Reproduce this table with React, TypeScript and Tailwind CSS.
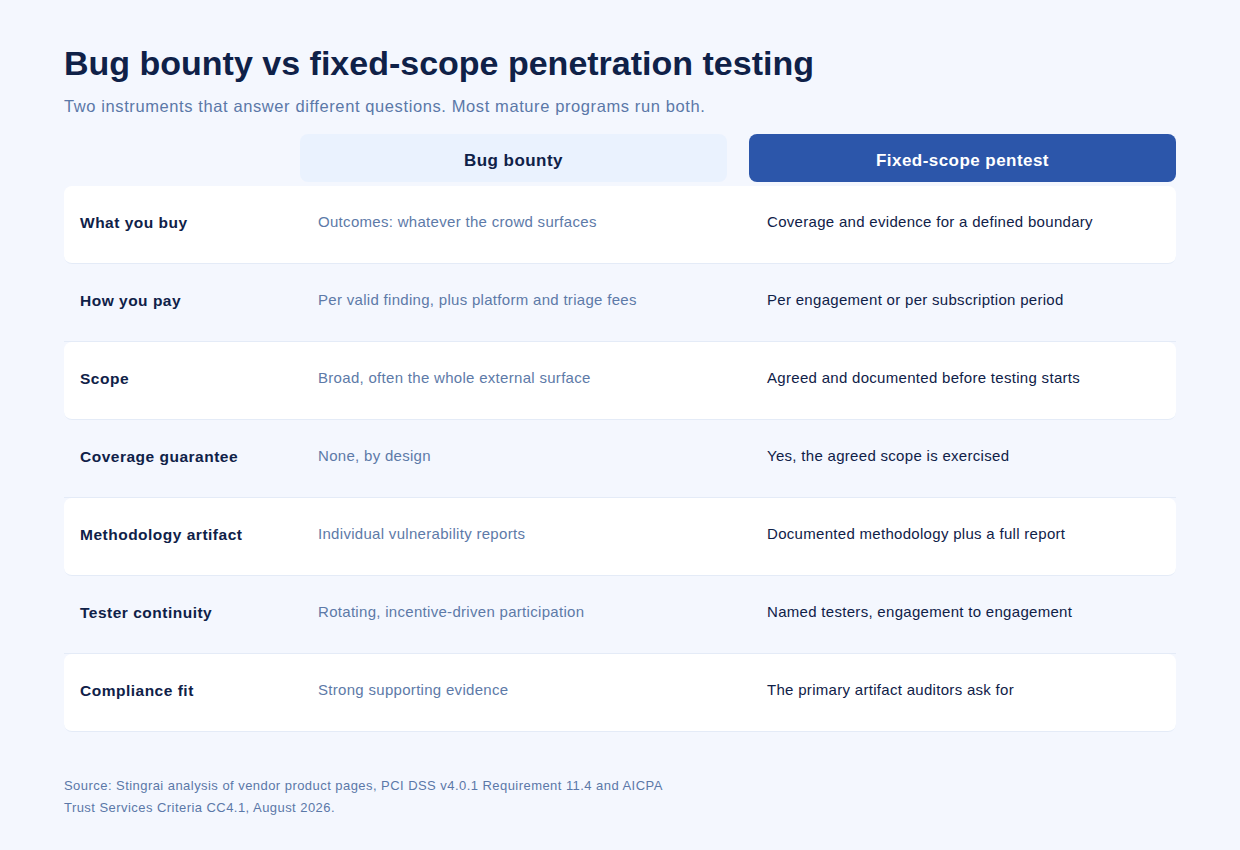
const ROWS: { label: string; bounty: string; pentest: string }[] = [
  { label: "What you buy", bounty: "Outcomes: whatever the crowd surfaces", pentest: "Coverage and evidence for a defined boundary" },
  { label: "How you pay", bounty: "Per valid finding, plus platform and triage fees", pentest: "Per engagement or per subscription period" },
  { label: "Scope", bounty: "Broad, often the whole external surface", pentest: "Agreed and documented before testing starts" },
  { label: "Coverage guarantee", bounty: "None, by design", pentest: "Yes, the agreed scope is exercised" },
  { label: "Methodology artifact", bounty: "Individual vulnerability reports", pentest: "Documented methodology plus a full report" },
  { label: "Tester continuity", bounty: "Rotating, incentive-driven participation", pentest: "Named testers, engagement to engagement" },
  { label: "Compliance fit", bounty: "Strong supporting evidence", pentest: "The primary artifact auditors ask for" },
];

export default function App() {
  return (
    <div
      className="min-h-[850px] w-full bg-[#f4f7fe] px-16 pt-[43px] pb-10 text-[#0f2148]"
      style={{ fontFamily: '"Liberation Sans", Arial, sans-serif' }}
    >
      <h1 className="text-[34px] font-bold leading-[40px] text-[#0f2148]">
        Bug bounty vs fixed-scope penetration testing
      </h1>
      <p className="mt-[12px] text-[16.5px] leading-[22px] tracking-[0.6px] text-[#5b78a8]">
        Two instruments that answer different questions. Most mature programs run both.
      </p>

      <div className="mt-[17px] w-[1112px]">
        <div className="flex h-[48px]">
          <div className="w-[236px]" />
          <div className="flex w-[427px] items-center justify-center rounded-lg bg-[#eaf2fe] pt-[6px] text-[17px] font-bold tracking-[0.45px] text-[#0f2148]">
            Bug bounty
          </div>
          <div className="ml-[22px] flex w-[427px] items-center justify-center rounded-lg bg-[#2c56aa] pt-[6px] text-[17px] font-bold tracking-[0.45px] text-white">
            Fixed-scope pentest
          </div>
        </div>

        <div className="mt-[4px] flex flex-col">
          {ROWS.map((r, i) => (
            <div
              key={r.label}
              className={`flex h-[78px] items-center border-b border-[#e4ebf7] pb-[4px] ${
                i % 2 === 0 ? "rounded-lg bg-white" : ""
              }`}
            >
              <div className="w-[236px] pl-4 text-[15.5px] font-bold tracking-[0.5px]">{r.label}</div>
              <div className="w-[449px] pl-[18px] text-[15px] tracking-[0.3px] text-[#5d7aa8]">{r.bounty}</div>
              <div className="flex-1 pl-[18px] text-[15px] tracking-[0.3px] text-[#0f2148]">{r.pentest}</div>
            </div>
          ))}
        </div>
      </div>

      <p className="mt-[43px] max-w-[612px] text-[13px] leading-[22px] tracking-[0.45px] text-[#5b78a8]">
        Source: Stingrai analysis of vendor product pages, PCI DSS v4.0.1 Requirement 11.4 and AICPA
        Trust Services Criteria CC4.1, August 2026.
      </p>
    </div>
  );
}
